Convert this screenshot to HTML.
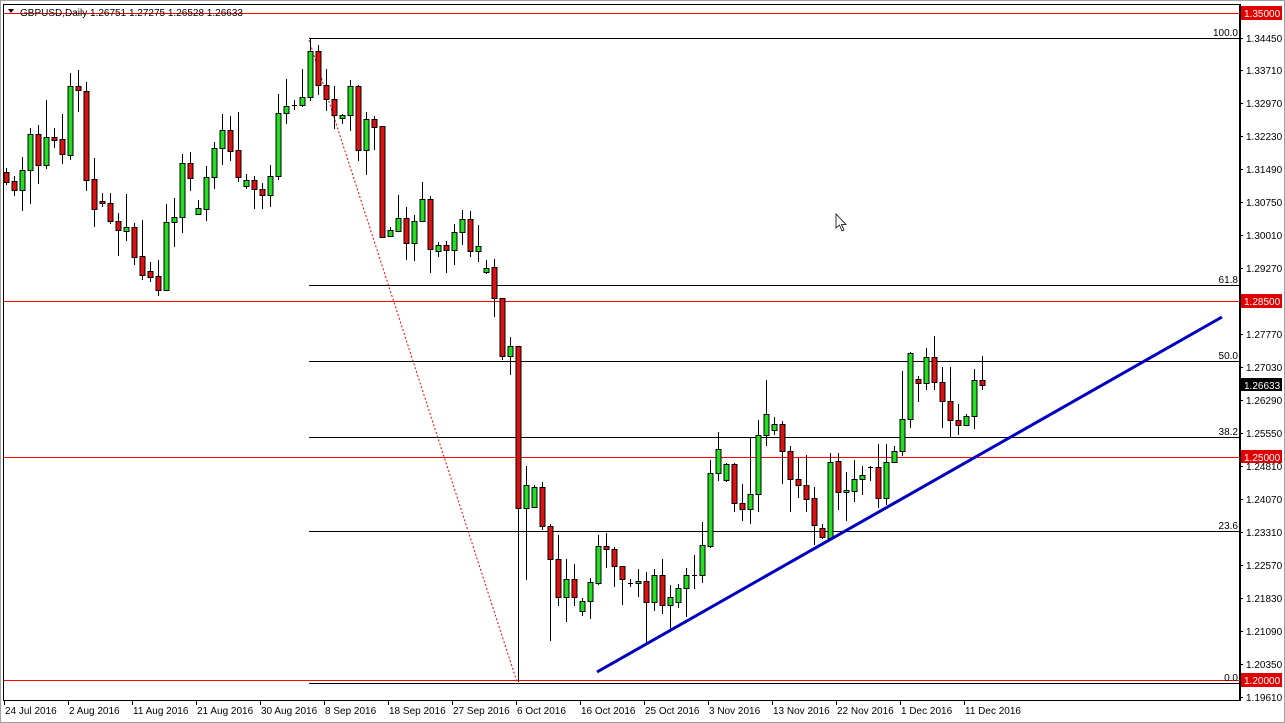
<!DOCTYPE html>
<html><head><meta charset="utf-8"><style>
html,body{margin:0;padding:0;background:#fff;width:1285px;height:723px;overflow:hidden}
svg{display:block}
text{font-family:"Liberation Sans",sans-serif;font-size:10px;fill:#000}
</style></head><body>
<svg id="s" width="1285" height="723" viewBox="0 0 1285 723" xmlns="http://www.w3.org/2000/svg">
<rect x="0" y="0" width="1285" height="723" fill="#fff"/>
<rect x="0.5" y="0.5" width="1284" height="722" fill="none" stroke="#a0a0a0"/>
<rect x="3.5" y="4.5" width="1236" height="696" fill="none" stroke="#000"/>
<line x1="1240.5" y1="4" x2="1240.5" y2="701" stroke="#000"/>
<!-- fib -->
<g stroke="#000" stroke-width="1">
<line x1="309" y1="38.5" x2="1240" y2="38.5"/>
<line x1="309" y1="285.5" x2="1240" y2="285.5"/>
<line x1="309" y1="361.5" x2="1240" y2="361.5"/>
<line x1="309" y1="437.5" x2="1240" y2="437.5"/>
<line x1="309" y1="531.5" x2="1240" y2="531.5"/>
<line x1="309" y1="683.5" x2="1240" y2="683.5"/>
</g>
<!-- red horizontals -->
<rect x="4" y="13" width="1236" height="1" fill="#ff0000"/>
<rect x="4" y="301" width="1236" height="1" fill="#ff0000"/>
<rect x="4" y="457" width="1236" height="1" fill="#ff0000"/>
<rect x="4" y="680" width="1236" height="1" fill="#ff0000"/>
<g text-anchor="end">
<text x="1238" y="36">100.0</text><text x="1238" y="283">61.8</text><text x="1238" y="359">50.0</text>
<text x="1238" y="435">38.2</text><text x="1238" y="529">23.6</text><text x="1238" y="681">0.0</text>
</g>
<line x1="309" y1="40" x2="517" y2="682" stroke="#ff0000" stroke-dasharray="2,2"/>
<g id="c"></g>
<line x1="597" y1="672" x2="1222" y2="317" stroke="#0000c0" stroke-width="3"/>
<text x="20" y="16">GBPUSD,Daily  1.26751 1.27275 1.26528 1.26633</text>
<path d="M8 9 L14 9 L11 13 Z" fill="#000"/>
<path d="M836 214 L836 228 L839.5 225 L842 231 L844 230 L841.5 224.5 L846 224.5 Z" fill="#fff" stroke="#000" stroke-width="0.8"/>
<g id="ax"></g>
<rect x="1241" y="6" width="41" height="14" fill="#e00000"/><text x="1244" y="17" style="fill:#fff">1.35000</text>
<rect x="1241" y="294" width="41" height="14" fill="#e00000"/><text x="1244" y="305" style="fill:#fff">1.28500</text>
<rect x="1241" y="378" width="41" height="13" fill="#000"/><text x="1244" y="389" style="fill:#fff">1.26633</text>
<rect x="1241" y="450" width="41" height="13" fill="#e00000"/><text x="1244" y="461" style="fill:#fff">1.25000</text>
<rect x="1241" y="673" width="41" height="14" fill="#e00000"/><text x="1244" y="684" style="fill:#fff">1.20000</text>
<g id="dt"></g>
</svg>
<script>
var d=[[172,182,168,185],[181,190,176,196],[190,170,157,211],[170,134,128,204],[134,165,125,184],[165,137,100,169],[137,140,128,148],[139,154,114,164],[155,86,73,160],[86,90,70,112],
[91,180,82,191],[179,209,158,227],[201,203,193,207],[203,221,193,224],[221,230,213,256],[231,227,194,241],[227,257,223,265],[256,275,220,280],[271,277,262,282],[276,290,260,296],
[290,222,204,291],[222,217,198,247],[217,163,154,233],[163,178,152,191],[214,208,200,215],[209,177,166,221],[177,148,142,189],[148,130,114,165],[130,151,116,161],[150,177,112,182],
[186,180,174,189],[180,189,176,209],[189,195,183,209],[195,176,165,207],[176,113,94,180],[113,106,79,124],[105,105,100,110],[105,97,69,107],[97,51,38,101],[51,85,45,95],
[85,99,69,111],[99,115,86,129],[118,115,114,124],[115,86,80,131],[86,150,85,161],[150,119,112,175],[119,127,116,150],[126,237,126,238],[236,230,227,237],[231,218,195,232],
[218,243,207,260],[243,221,215,261],[221,199,182,221],[199,249,196,273],[251,245,242,257],[245,250,241,273],[250,232,224,265],[232,219,210,245],[219,251,211,257],[251,246,225,262],
[272,268,260,274],[267,298,259,317],[298,356,298,360],[356,346,337,375],[346,508,346,682],[508,485,466,580],[507,487,485,507],[487,526,482,530],[526,559,524,641],[559,597,535,606],
[597,579,559,622],[579,597,564,606],[611,601,598,616],[601,582,578,619],[583,546,535,585],[546,549,533,568],[549,566,547,587],[566,579,566,605],[583,583,579,587],[583,581,569,597],
[581,602,572,643],[602,575,569,611],[575,605,559,614],[605,597,585,630],[602,588,584,608],[588,575,568,617],[575,575,555,589],[575,545,522,583],[546,473,460,548],[473,449,432,481],
[480,464,463,482],[464,503,463,512],[503,509,484,521],[509,494,438,524],[494,435,420,512],[435,414,380,446],[430,424,417,435],[424,451,421,484],[451,479,446,512],[479,485,458,498],
[485,499,455,512],[498,525,487,545],[528,537,524,539],[538,462,453,539],[461,492,453,510],[492,490,472,521],[491,479,460,502],[479,475,466,495],[467,467,466,481],[467,498,444,508],
[498,462,444,505],[462,451,446,463],[451,419,371,456],[419,353,352,428],[379,383,376,402],[383,357,348,390],[357,382,336,390],[382,401,367,428],[401,420,367,437],[420,425,404,435],
[425,416,414,426],[416,380,369,429],[380,385,356,390]];
var g=document.getElementById('c'),h='';
d.forEach(function(c,i){var x=6+8*i,o=c[0],cl=c[1],hi=c[2],lo=c[3];
var t=Math.min(o,cl),b=Math.max(o,cl);
h+='<line x1="'+(x+.5)+'" y1="'+hi+'" x2="'+(x+.5)+'" y2="'+lo+'" stroke="#000"/>';
if(b-t<1){h+='<line x1="'+(x-2)+'" y1="'+(t+.5)+'" x2="'+(x+3)+'" y2="'+(t+.5)+'" stroke="#000"/>';}
else h+='<rect x="'+(x-2)+'" y="'+(t+.5)+'" width="5" height="'+(b-t)+'" fill="'+(cl<o?'#22dd22':'#dd1111')+'" stroke="#000" stroke-width="1"/>';});
g.innerHTML=h;
var ax=[["1.34450",38],["1.33710",70],["1.32970",103],["1.32230",136],["1.31490",169],["1.30750",202],["1.30010",235],["1.29270",268],["1.27770",334],["1.27030",367],["1.26290",400],["1.25550",433],["1.24810",466],["1.24070",499],["1.23310",532],["1.22570",565],["1.21830",598],["1.21090",631],["1.20350",664],["1.19610",697]];
h='';ax.forEach(function(a){h+='<line x1="1240" y1="'+a[1]+'.5" x2="1243" y2="'+a[1]+'.5" stroke="#000"/><text x="1246" y="'+(a[1]+4)+'">'+a[0]+'</text>';});
document.getElementById('ax').innerHTML=h;
var dt=["24 Jul 2016","2 Aug 2016","11 Aug 2016","21 Aug 2016","30 Aug 2016","8 Sep 2016","18 Sep 2016","27 Sep 2016","6 Oct 2016","16 Oct 2016","25 Oct 2016","3 Nov 2016","13 Nov 2016","22 Nov 2016","1 Dec 2016","11 Dec 2016"];
h='';dt.forEach(function(t,i){var x=4+64*i;h+='<line x1="'+(x+.5)+'" y1="701" x2="'+(x+.5)+'" y2="705" stroke="#000"/><text x="'+(x+1)+'" y="714">'+t+'</text>';});
document.getElementById('dt').innerHTML=h;
</script>
</body></html>
